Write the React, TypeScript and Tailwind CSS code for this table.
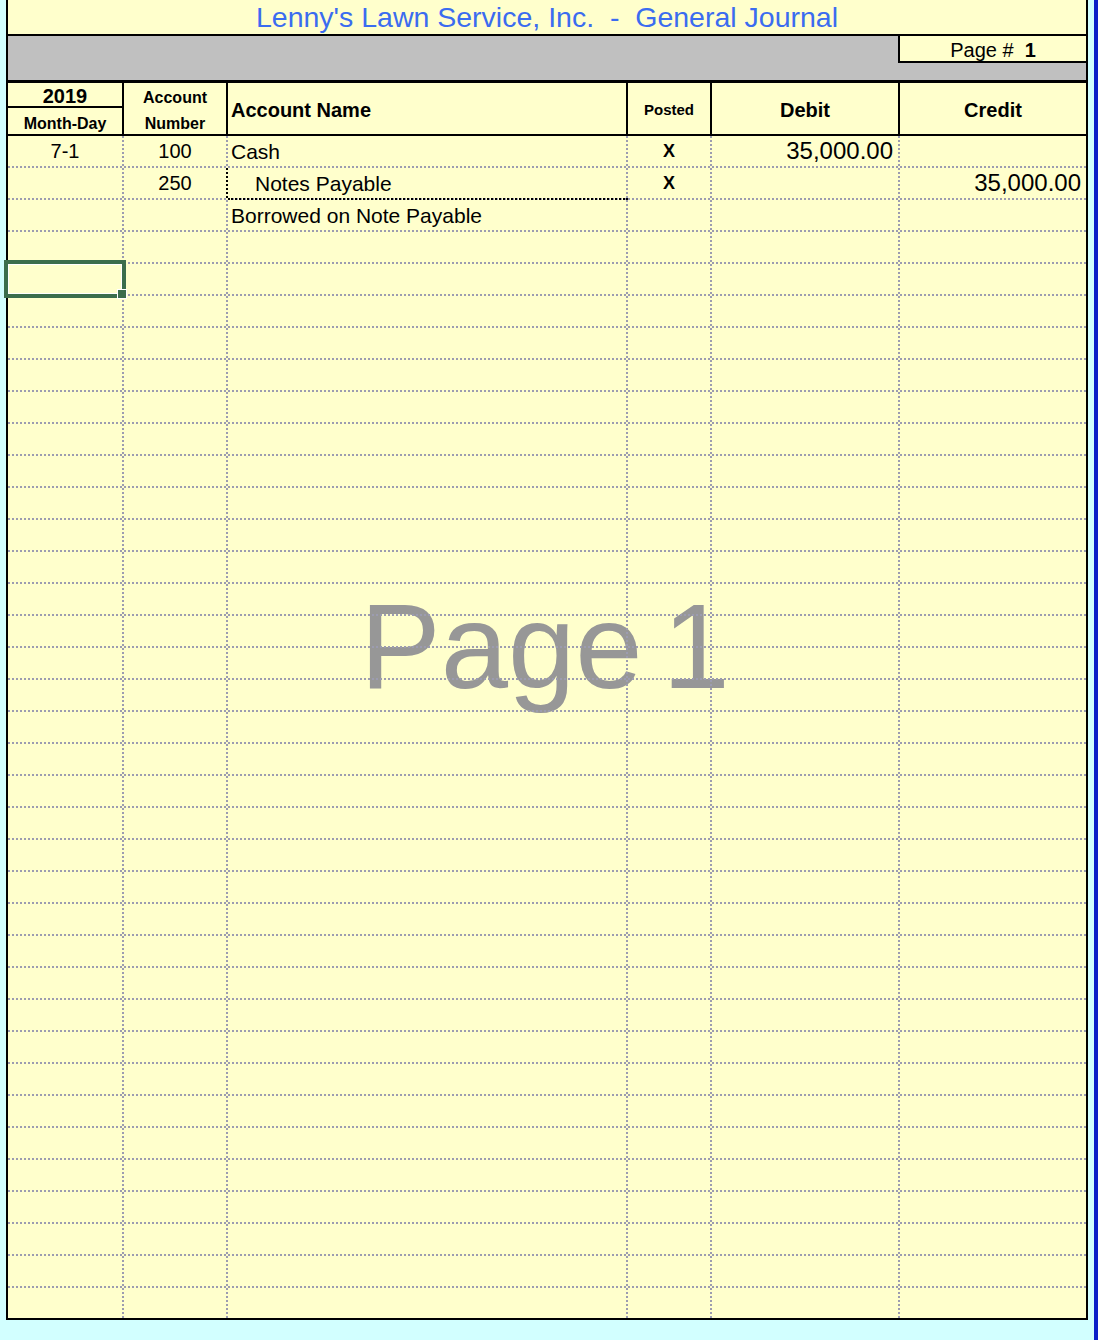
import React from 'react';

type Entry = {
  date?: string;
  account?: string;
  name?: string;
  indent?: boolean;
  posted?: boolean;
  debit?: string;
  credit?: string;
  active?: boolean;
};

const entries: Entry[] = [
  { date: '7-1', account: '100', name: 'Cash', posted: true, debit: '35,000.00' },
  { account: '250', name: 'Notes Payable', indent: true, posted: true, credit: '35,000.00', active: true },
  { name: 'Borrowed on Note Payable' },
];

const ROW_COUNT = 37;
const cols = 'grid grid-cols-[116px_104px_400px_84px_188px_186px]';
const dotR = 'border-r-2 border-dotted border-[#9c9cb0]';

const JournalRow = ({ entry, last }: { entry?: Entry; last: boolean }) => {
  const e = entry || {};
  return (
    <div
      className={`${cols} grid-rows-[30px] leading-none ${
        last ? 'h-[30px]' : 'h-[32px] border-b-2 border-dotted border-[#9c9cb0]'
      }`}
    >
      <div className={`${dotR} flex items-center justify-center text-[20px]`}>{e.date}</div>
      <div
        className={`flex items-center justify-center text-[20px] border-r-2 border-dotted ${
          e.active ? 'border-black' : 'border-[#9c9cb0]'
        }`}
      >
        {e.account}
      </div>
      <div
        className={`relative flex items-center text-[21px] whitespace-nowrap ${
          e.indent ? 'pl-[27px]' : 'pl-[3px]'
        } ${dotR}`}
      >
        {e.name}
        {e.active && (
          <span className="absolute bottom-[-2px] left-0 right-[-2px] border-b-2 border-dotted border-black" />
        )}
      </div>
      <div className={`${dotR} flex items-center justify-center text-[18px] font-bold`}>
        {e.posted ? 'X' : ''}
      </div>
      <div className={`${dotR} flex items-center justify-end pr-[5px] text-[24px]`}>{e.debit}</div>
      <div className="flex items-center justify-end pr-[5px] text-[24px]">{e.credit}</div>
    </div>
  );
};

const App = () => {
  const rows = Array.from({ length: ROW_COUNT }, (_, i) => entries[i]);

  return (
    <div className="relative w-[1098px] min-h-[1340px] bg-[#d2ffff] text-black font-['Liberation_Sans',Arial,sans-serif]">
      <div className="relative isolate ml-[6px] w-[1082px] border-x-2 border-b-2 border-black bg-[#ffffcc]">
        {/* title */}
        <div className="flex h-[34px] items-center justify-center whitespace-pre text-[28.5px] leading-none text-[#3b6cf0]">
          {"Lenny's Lawn Service, Inc.  -  General Journal"}
        </div>

        {/* gray band with page number */}
        <div className="flex h-[49px] justify-end border-t-2 border-b-[3px] border-black bg-[#c0c0c0]">
          <div className="flex h-[27px] w-[188px] items-center justify-center whitespace-pre border-l-2 border-b-2 border-black bg-[#ffffcc] pt-[3px] text-[20px]">
            {'Page #  '}
            <span className="font-bold">1</span>
          </div>
        </div>

        {/* header */}
        <div className={`${cols} h-[53px] border-b-2 border-black font-bold`}>
          <div className="flex flex-col border-r-2 border-black">
            <div className="flex h-[25px] items-center justify-center border-b-2 border-black pt-[3px] text-[20px]">
              2019
            </div>
            <div className="flex flex-1 items-center justify-center pt-[2px] text-[16px]">Month-Day</div>
          </div>
          <div className="flex flex-col items-center justify-center border-r-2 border-black pt-[2px] text-[16px] leading-[26px]">
            <span>Account</span>
            <span>Number</span>
          </div>
          <div className="flex items-center border-r-2 border-black pl-[3px] text-[20px]">Account Name</div>
          <div className="flex items-center justify-center border-r-2 border-black text-[15px]">Posted</div>
          <div className="flex items-center justify-center border-r-2 border-black text-[20px]">Debit</div>
          <div className="flex items-center justify-center text-[20px]">Credit</div>
        </div>

        {/* body */}
        {rows.map((entry, i) => (
          <JournalRow key={i} entry={entry} last={i === ROW_COUNT - 1} />
        ))}

        {/* watermark */}
        <div className="pointer-events-none absolute left-[352px] top-[586px] -z-10 whitespace-pre text-[121px] leading-none text-[#979797]">
          Page<span className="ml-[20px]">1</span>
        </div>
      </div>

      {/* selected cell */}
      <div className="absolute left-[4px] top-[260px] h-[38px] w-[122px] border-4 border-[#3b6e4c] shadow-[inset_0_0_0_1px_#ffffff]" />
      <div className="absolute left-[117px] top-[289px] h-[10px] w-[10px] border border-white bg-[#3b6e4c]" />

      {/* right edge strip */}
      <div className="absolute right-0 top-0 h-full w-[4px] bg-[#0b20c8]" />
    </div>
  );
};

export default App;
